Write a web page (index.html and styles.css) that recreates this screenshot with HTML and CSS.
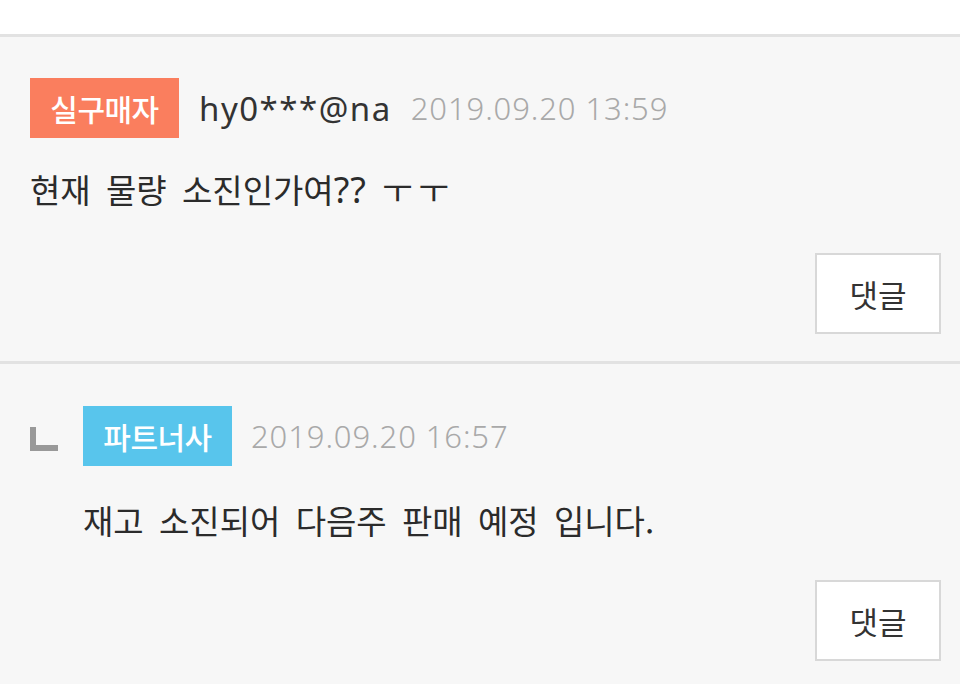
FILE: index.html
```html
<!DOCTYPE html>
<html lang="ko">
<head>
<meta charset="utf-8">
<link rel="stylesheet" href="styles.css">
</head>
<body>
<div class="top"></div>
<div class="comment">
  <div class="meta">
    <span class="badge buyer">실구매자</span>
    <span class="user">hy0***@na</span>
    <span class="date">2019.09.20 13:59</span>
  </div>
  <p class="text">현재 물량 소진인가여<span class="q">??</span> <span class="jamo">ㅜㅜ</span></p>
  <div class="actions"><button class="reply-btn">댓글</button></div>
</div>
<div class="comment reply">
  <div class="meta">
    <span class="arrow"></span>
    <span class="badge partner">파트너사</span>
    <span class="date">2019.09.20 16:57</span>
  </div>
  <p class="text indent">재고 소진되어 다음주 판매 예정 입니다.</p>
  <div class="actions"><button class="reply-btn">댓글</button></div>
</div>
</body>
</html>
```

FILE: styles.css
```css
html, body {
  margin: 0;
  padding: 0;
  background: #f7f7f7;
  font-family: "Noto Sans CJK KR", "Noto Sans", sans-serif;
  color: #333;
}
.top {
  height: 34px;
  background: #fff;
  border-bottom: 3px solid #e2e2e2;
}
.comment {
  padding: 41px 19px 0 30px;
  height: 283px;
  border-bottom: 3px solid #e2e2e2;
  display: flex;
  flex-direction: column;
}
.comment.reply {
  padding-top: 42px;
  border-bottom: none;
}
.meta {
  display: flex;
  align-items: center;
  height: 60px;
}
.badge {
  display: flex;
  align-items: center;
  justify-content: center;
  height: 60px;
  width: 149px;
  color: #fff;
  font-size: 30px;
  font-weight: 500;
  letter-spacing: -0.5px;
}
.buyer { background: #fa7e5e; }
.partner { background: #58c5ec; }
.user {
  margin-left: 20px;
  font-family: "Noto Sans", sans-serif;
  font-size: 33px;
  letter-spacing: 1.5px;
  color: #333;
}
.date {
  margin-left: 19px;
  font-family: "Noto Sans", sans-serif;
  font-weight: 300;
  font-size: 31px;
  color: #a9a9a9;
  letter-spacing: 0.9px;
}
.arrow {
  width: 28px;
  height: 24px;
  box-sizing: border-box;
  border-left: 6px solid #999;
  border-bottom: 6px solid #999;
  margin-right: 25px;
  margin-top: 6px;
}
.text {
  margin: 31px 0 0;
  font-size: 33px;
  line-height: 40px;
  word-spacing: 6px;
  color: #2b2b2b;
}
.q { font-family: "Noto Sans", sans-serif; font-size: 36px; letter-spacing: 1px; }
.jamo { letter-spacing: 6px; }
.text.indent { margin-left: 53px; margin-top: 34px; }
.actions {
  display: flex;
  justify-content: flex-end;
  margin-top: 43px;
}
.reply .actions { margin-top: 40px; }
.reply-btn {
  width: 126px;
  height: 81px;
  background: #fff;
  border: 2px solid #d8d8d8;
  font-family: "Noto Sans CJK KR", sans-serif;
  font-size: 31px;
  color: #333;
  padding: 0;
}
```
